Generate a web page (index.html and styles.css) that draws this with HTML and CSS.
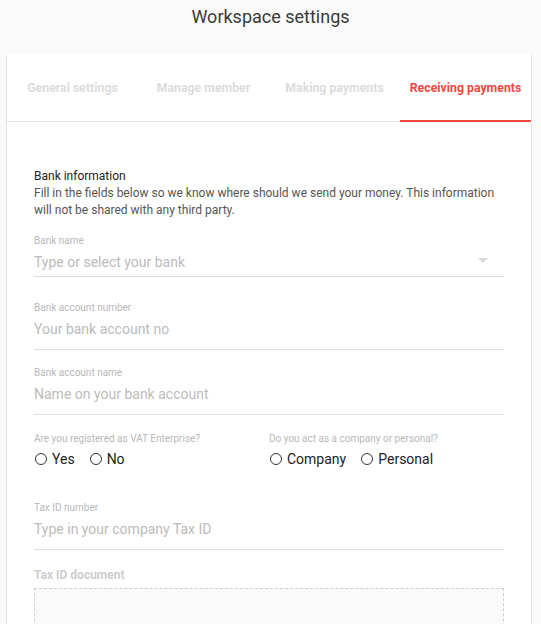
FILE: index.html
```html
<!DOCTYPE html>
<html>
<head>
<meta charset="utf-8">
<link rel="stylesheet" href="styles.css">
</head>
<body>
<header class="page-head">
  <h1 class="title">Workspace settings</h1>
</header>
<main class="card">
  <nav class="tabs">
    <div class="tab">General settings</div>
    <div class="tab">Manage member</div>
    <div class="tab">Making payments</div>
    <div class="tab active">Receiving payments</div>
  </nav>
  <section class="content">
    <div class="intro">
      <div class="intro-title">Bank information</div>
      <div class="intro-text">Fill in the fields below so we know where should we send your money. This information will not be shared with any third party.</div>
    </div>

    <div class="field select">
      <div class="label">Bank name</div>
      <div class="input">
        <span class="ph">Type or select your bank</span>
        <span class="caret"></span>
      </div>
    </div>

    <div class="field">
      <div class="label">Bank account number</div>
      <div class="input"><span class="ph">Your bank account no</span></div>
    </div>

    <div class="field">
      <div class="label">Bank account name</div>
      <div class="input"><span class="ph">Name on your bank account</span></div>
    </div>

    <div class="radio-grid">
      <div class="radio-group">
        <div class="label">Are you registered as VAT Enterprise?</div>
        <div class="radios">
          <span class="radio"><span class="dot"></span>Yes</span>
          <span class="radio"><span class="dot"></span>No</span>
        </div>
      </div>
      <div class="radio-group">
        <div class="label">Do you act as a company or personal?</div>
        <div class="radios">
          <span class="radio"><span class="dot"></span>Company</span>
          <span class="radio"><span class="dot"></span>Personal</span>
        </div>
      </div>
    </div>

    <div class="field tax">
      <div class="label">Tax ID number</div>
      <div class="input"><span class="ph">Type in your company Tax ID</span></div>
    </div>

    <div class="doc">
      <div class="doc-label">Tax ID document</div>
      <div class="dropzone"></div>
    </div>
  </section>
</main>
</body>
</html>
```

FILE: styles.css
```css
* { box-sizing: border-box; }
html, body { margin: 0; padding: 0; }
body {
  background: #fafafa;
  font-family: Roboto, "Liberation Sans", Arial, sans-serif;
  color: #333;
}
.page-head {
  height: 55px;
  padding-top: 5px;
}
.title {
  margin: 0;
  text-align: center;
  font-size: 18px;
  font-weight: 400;
  line-height: 24px;
  color: #3a3a3a;
}
.card {
  margin: 0 9px 0 6px;
  background: #fff;
  border-left: 1px solid #e2e2e2;
  border-right: 1px solid #e2e2e2;
  height: 620px;
}
.tabs {
  display: grid;
  grid-template-columns: repeat(4, 1fr);
  border-bottom: 1px solid #e2e2e2;
}
.tab {
  height: 67px;
  display: flex;
  align-items: center;
  justify-content: center;
  font-size: 12.3px;
  font-weight: 700;
  color: #dcdcdc;
  padding-bottom: 1px;
  margin-bottom: -1px;
  white-space: nowrap;
}
.tab.active {
  color: #f4463e;
  border-bottom: 2px solid #f4463e;
  padding-bottom: 0;
}
.content {
  padding: 46px 27px 0 27px;
}
.intro-title {
  font-size: 12px;
  line-height: 17px;
  color: #222;
}
.intro-text {
  font-size: 12px;
  line-height: 17px;
  color: #555;
}
.field {
  margin-top: 16px;
  border-bottom: 1px solid #dedede;
  padding-bottom: 10px;
}
.field.select {
  margin-top: 15px;
  padding-bottom: 4px;
  margin-bottom: 24px;
}
.field.select + .field {
  margin-top: 24px;
}
.label {
  font-size: 10px;
  line-height: 14px;
  color: #b8b8b8;
}
.input {
  margin-top: 4px;
  height: 20px;
  display: flex;
  align-items: center;
  justify-content: space-between;
}
.ph {
  font-size: 14px;
  line-height: 20px;
  color: #bbb;
}
.caret {
  width: 0;
  height: 0;
  border-left: 5px solid transparent;
  border-right: 5px solid transparent;
  border-top: 5px solid #d8d8d8;
  margin-right: 16px;
  margin-top: -4px;
}
.radio-grid {
  display: grid;
  grid-template-columns: 1fr 1fr;
  margin-top: 17px;
}
.radios {
  margin-top: 3px;
  display: flex;
  gap: 14px;
  height: 20px;
  align-items: center;
}
.radio {
  display: inline-flex;
  align-items: center;
  gap: 5px;
  font-size: 14px;
  line-height: 20px;
  color: #222;
}
.dot {
  width: 12px;
  height: 12px;
  border: 1.5px solid #333;
  border-radius: 50%;
  margin-left: 1px;
}
.field.tax {
  margin-top: 32px;
}
.doc {
  margin-top: 17px;
}
.doc-label {
  font-size: 12px;
  line-height: 16px;
  font-weight: 700;
  color: #cdcdcd;
}
.dropzone {
  margin-top: 5px;
  height: 120px;
  background: #fafafa;
  border: 1px dashed #cfcfcf;
}
```
